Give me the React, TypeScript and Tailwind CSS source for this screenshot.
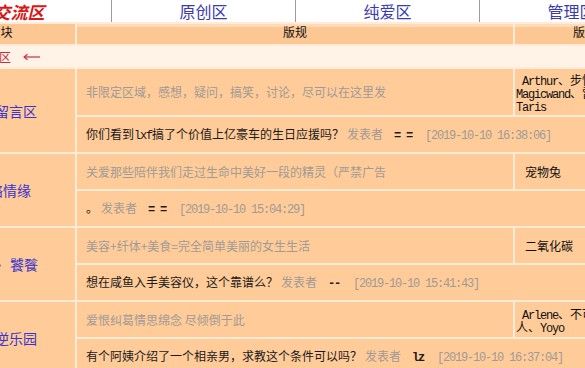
import React from "react";

type Part = { t: string; mono?: boolean };
type Forum = {
  name: React.ReactNode;
  key: string;
  namePr: string;
  desc: string;
  mods: string[];
  modsPad: string;
  title: Part[];
  author: string;
  time: string;
  h1: string;
};

const forums: Forum[] = [
  {
    key: "a",
    name: "灌水留言区",
    namePr: "pr-[38px]",
    desc: "非限定区域，感想，疑问，搞笑，讨论，尽可以在这里发",
    mods: [" Arthur、步惊云、", "Magicwand、雷雷、", "Taris"],
    modsPad: "pl-[1px]",
    title: [{ t: "你们看到" }, { t: "lxf", mono: true }, { t: "搞了个价值上亿豪车的生日应援吗？" }],
    author: "= =",
    time: "[2019-10-10 16:38:06]",
    h1: "h-[46px]",
  },
  {
    key: "b",
    name: "网络情缘",
    namePr: "pr-[44px]",
    desc: "关爱那些陪伴我们走过生命中美好一段的精灵（严禁广告",
    mods: ["宠物兔"],
    modsPad: "pl-[10px]",
    title: [{ t: "。" }],
    author: "= =",
    time: "[2019-10-10 15:04:29]",
    h1: "h-[35px]",
  },
  {
    key: "c",
    name: (
      <>
        美食<span className="mr-[4px]">·</span>饕餮
      </>
    ),
    namePr: "pr-[37px]",
    desc: "美容+纤体+美食=完全简单美丽的女生生活",
    mods: ["二氧化碳"],
    modsPad: "pl-[10px]",
    title: [{ t: "想在咸鱼入手美容仪，这个靠谱么？" }],
    author: "--",
    time: "[2019-10-10 15:41:43]",
    h1: "h-[35px]",
  },
  {
    key: "d",
    name: "心灵逆乐园",
    namePr: "pr-[38px]",
    desc: "爱恨纠葛情思绵念 尽倾倒于此",
    mods: [" Arlene、不可说的", "人、Yoyo"],
    modsPad: "pl-[1px]",
    title: [{ t: "有个阿姨介绍了一个相亲男，求教这个条件可以吗？" }],
    author: "lz",
    time: "[2019-10-10 16:37:04]",
    h1: "h-[35px]",
  },
];

const mono = "font-['Liberation_Mono','Noto_Sans_CJK_SC',monospace] tracking-[-1.2px]";

function Mods({ lines }: { lines: string[] }) {
  return (
    <div className="text-[12px] text-[#111] whitespace-pre">
      {lines.map((l, i) => {
        const parts = l.split(/([A-Za-z ]+)/).filter((p) => p.length > 0);
        return (
          <div key={i} className="h-[13px] leading-[13px] overflow-visible">
            {parts.map((p, j) =>
              /^[A-Za-z ]+$/.test(p) ? (
                <span key={j} className={`${mono} leading-[13px]`}>
                  {p}
                </span>
              ) : (
                <span key={j} className="leading-[13px]">
                  {p}
                </span>
              )
            )}
          </div>
        );
      })}
    </div>
  );
}

export default function App() {
  return (
    <div className="w-[585px] h-[368px] overflow-hidden bg-white font-['Noto_Sans_CJK_SC',sans-serif]">
      {/* top nav */}
      <div className="flex h-[23px] w-max -ml-[73px] border-b border-[#9c9c9c] bg-white">
        <div className="w-[185px] h-full border-r border-[#9c9c9c] flex items-center justify-center">
          <span className="text-[17px] font-bold italic text-[#d81818] leading-none">交流区</span>
        </div>
        {["原创区", "纯爱区", "管理区"].map((n) => (
          <div
            key={n}
            className="w-[184px] h-full border-r border-[#9c9c9c] flex items-center justify-center text-[16px] leading-none text-[#3b3bb0]"
          >
            {n}
          </div>
        ))}
      </div>

      <table className="-ml-[80px] -mt-[1px] table-fixed border-separate border-spacing-[2px] bg-[#ffebd6] w-[737px] text-[12px]">
        <colgroup>
          <col className="w-[153px]" />
          <col className="w-[436px]" />
          <col className="w-[140px]" />
        </colgroup>
        <tbody>
          <tr>
            <td className="h-[20px] p-0 pl-[4px] bg-[#fdc793] text-center align-top leading-[16px] text-[#111]">
              版块
            </td>
            <td className="h-[20px] p-0 bg-[#fdc793] shadow-[inset_0_3px_0_#fedcba] text-center align-top leading-[16px] text-[#111]">
              版规
            </td>
            <td className="h-[20px] p-0 bg-[#fdc793] shadow-[inset_0_3px_0_#fedcba] text-center align-top leading-[16px] text-[#111]">
              版主
            </td>
          </tr>
          <tr>
            <td colSpan={3} className="h-[21px] p-0 pl-[53px] bg-[#fff3e7] align-middle">
              <div className="flex items-center text-[#cc2a3c] leading-[16px]">
                <span>交流区</span>
                <svg width="18" height="8" viewBox="0 0 18 8" className="ml-[12px]">
                  <path d="M1 4H17" stroke="#cc2a3c" strokeWidth="1.2" />
                  <path d="M4.5 1.2L1 4L4.5 6.8" stroke="#cc2a3c" strokeWidth="1.1" fill="none" />
                </svg>
              </div>
            </td>
          </tr>
          {forums.map((f) => (
            <React.Fragment key={f.key}>
              <tr>
                <td
                  rowSpan={2}
                  className={`p-0 ${f.namePr} bg-[#ffcc99] text-right align-middle text-[14px] leading-[18px] text-[#3a32cc] whitespace-nowrap`}
                >
                  {f.name}
                </td>
                <td
                  className={`${f.h1} p-0 pl-[9px] bg-[#ffcc99] align-middle leading-[16px] text-[#a09a96] whitespace-nowrap`}
                >
                  {f.desc}
                </td>
                <td className={`${f.h1} p-0 ${f.modsPad} bg-[#ffcc99] align-middle overflow-hidden`}>
                  <Mods lines={f.mods} />
                </td>
              </tr>
              <tr>
                <td
                  colSpan={2}
                  className="h-[35px] p-0 pl-[9px] bg-[#ffcc99] align-middle leading-[16px] whitespace-nowrap"
                >
                  <span className="text-[#1a1a1a]">
                    {f.title.map((p, i) =>
                      p.mono ? (
                        <span key={i} className={mono}>
                          {p.t}
                        </span>
                      ) : (
                        <span key={i}>{p.t}</span>
                      )
                    )}
                  </span>
                  <span className="ml-[3px] text-[#a09a96]">发表者</span>
                  <span className={`ml-[11px] font-bold text-[#1a1a1a] whitespace-pre ${mono}`}>{f.author}</span>
                  <span className={`ml-[13px] text-[#a09a96] ${mono}`}>{f.time}</span>
                </td>
              </tr>
            </React.Fragment>
          ))}
        </tbody>
      </table>
    </div>
  );
}
